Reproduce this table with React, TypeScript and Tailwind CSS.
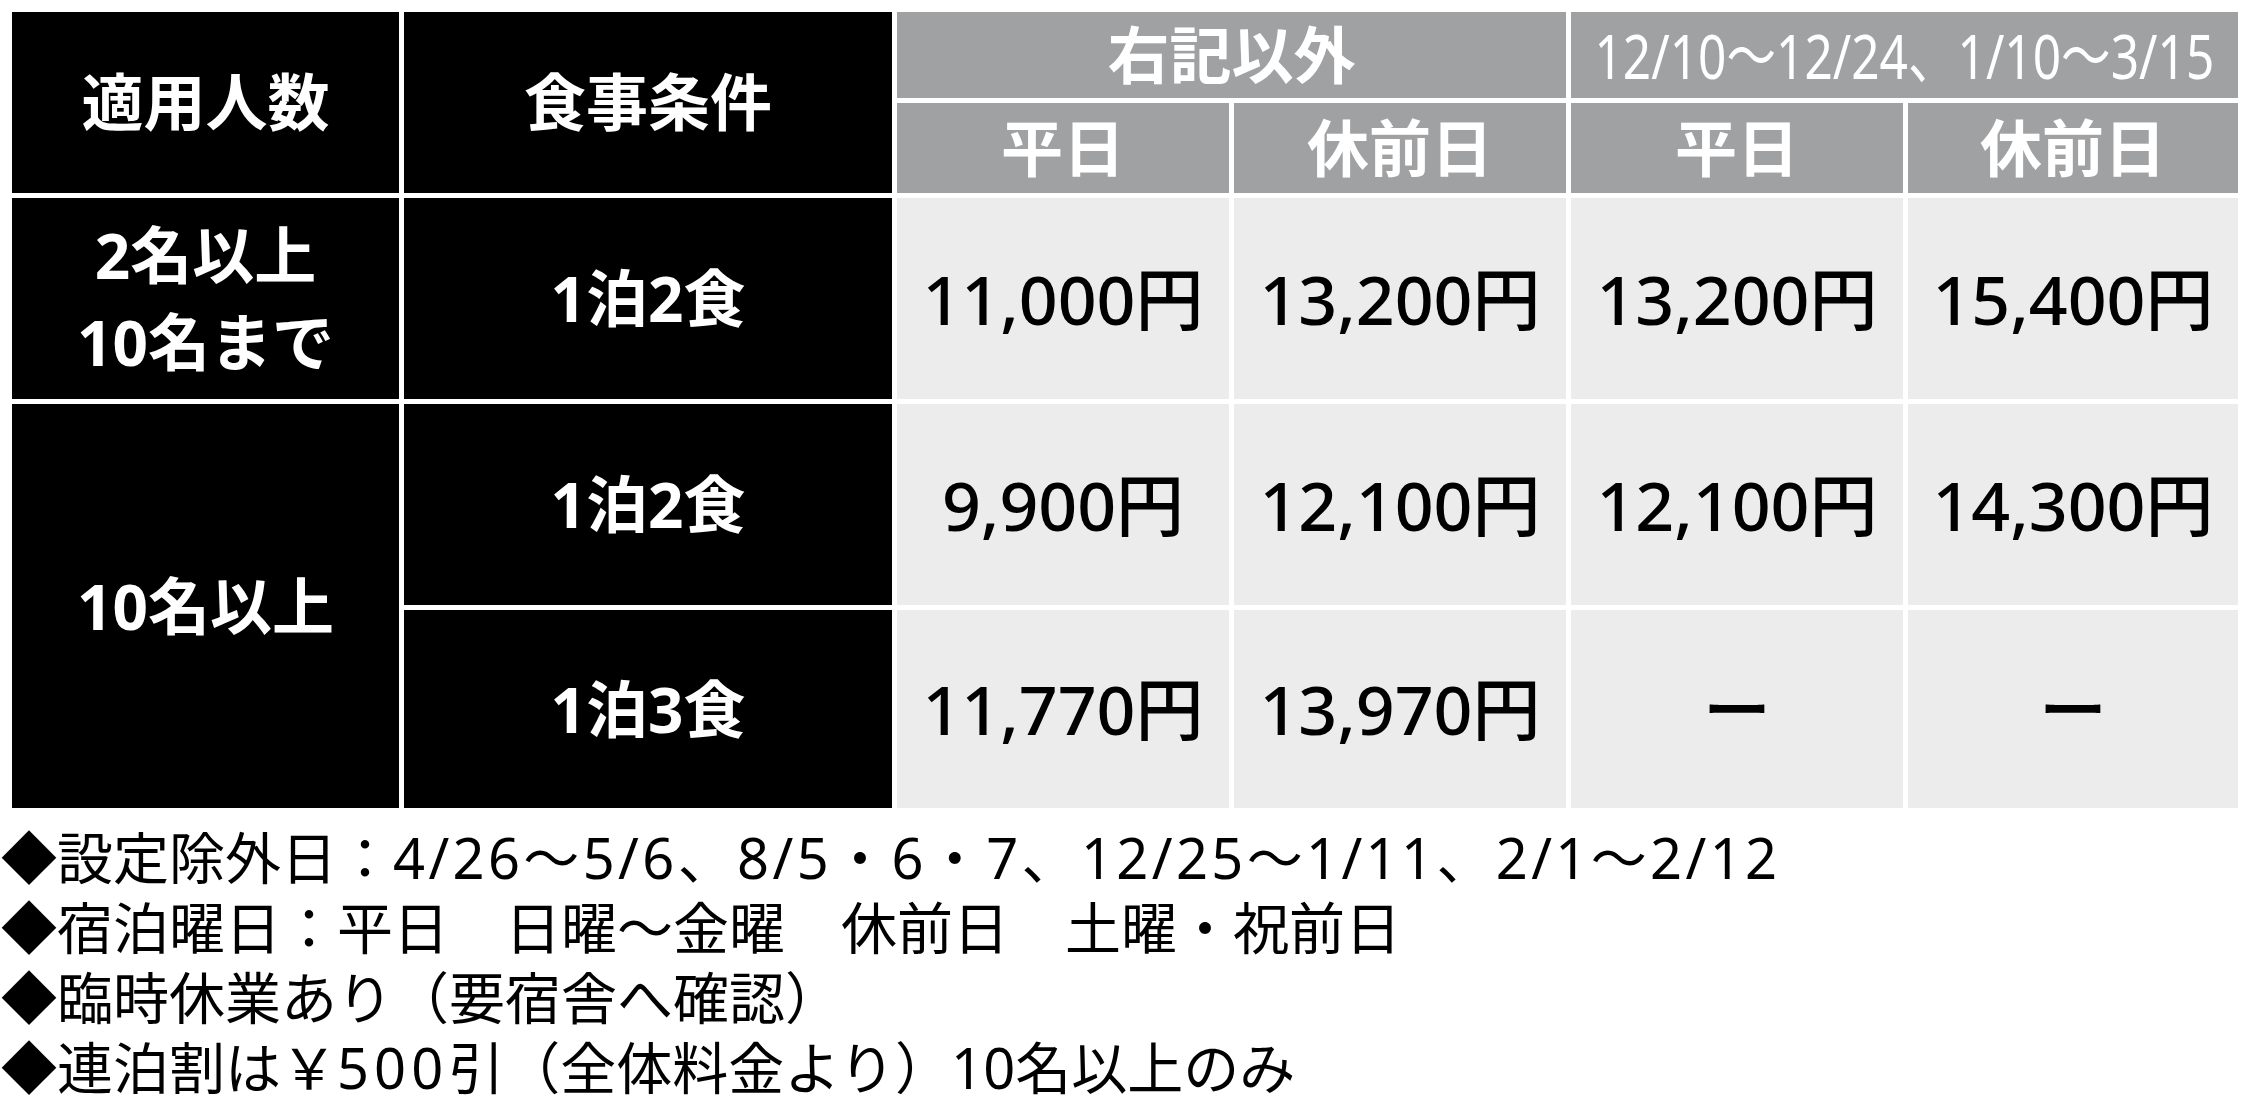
const dark = "bg-black text-white font-bold text-[62px] flex items-center justify-center text-center leading-[87px]";
const head = "bg-[#a0a1a3] text-white font-bold text-[62px] flex items-center justify-center whitespace-nowrap";
const cell = "bg-[#ececec] text-black font-medium text-[68px] flex items-center justify-center whitespace-nowrap";

const rows = [
  { meal: "1泊2食", prices: ["11,000円", "13,200円", "13,200円", "15,400円"] },
  { meal: "1泊2食", prices: ["9,900円", "12,100円", "12,100円", "14,300円"] },
  { meal: "1泊3食", prices: ["11,770円", "13,970円", "ー", "ー"] },
];

export default function App() {
  return (
    <div className="w-[2250px] h-[1109px] bg-white pt-[12px] pl-[12px] font-['Noto_Sans','Noto_Sans_CJK_JP',sans-serif]">
      {/* price table */}
      <div className="grid grid-cols-[387px_488px_332px_332px_332px_330px] grid-rows-[86px_90px_201px_201px_198px] gap-[5px]">
        <div className={`${dark} row-span-2`}>適用人数</div>
        <div className={`${dark} row-span-2`}>食事条件</div>
        <div className={`${head} col-span-2`}>右記以外</div>
        <div className={`${head} col-span-2 font-normal`}>
          <span className="inline-block scale-x-[0.8]">12/10～12/24、1/10～3/15</span>
        </div>
        <div className={head}>平日</div>
        <div className={head}>休前日</div>
        <div className={head}>平日</div>
        <div className={head}>休前日</div>

        <div className={dark}>
          2名以上
          <br />
          10名まで
        </div>
        <div className={dark}>{rows[0].meal}</div>
        {rows[0].prices.map((p, i) => (
          <div key={i} className={cell}>{p}</div>
        ))}

        <div className={`${dark} row-span-2`}>10名以上</div>
        <div className={dark}>{rows[1].meal}</div>
        {rows[1].prices.map((p, i) => (
          <div key={i} className={cell}>{p}</div>
        ))}
        <div className={dark}>{rows[2].meal}</div>
        {rows[2].prices.map((p, i) => (
          <div key={i} className={p === "ー" ? `${cell} font-bold` : cell}>{p}</div>
        ))}
      </div>

      {/* notes */}
      <div className="mt-[14px] -ml-[11px] text-[56px] leading-[70px] text-black whitespace-nowrap">
        <div>
          ◆設定除外日：<span className="tracking-[0.06em]">4/26～5/6、8/5・6・7、12/25～1/11、2/1～2/12</span>
        </div>
        <div>◆宿泊曜日：平日　日曜～金曜　休前日　土曜・祝前日</div>
        <div>◆臨時休業あり（要宿舎へ確認）</div>
        <div>
          ◆連泊割は￥<span className="tracking-[0.09em]">500</span>引（全体料金より）10名以上のみ
        </div>
      </div>
    </div>
  );
}
